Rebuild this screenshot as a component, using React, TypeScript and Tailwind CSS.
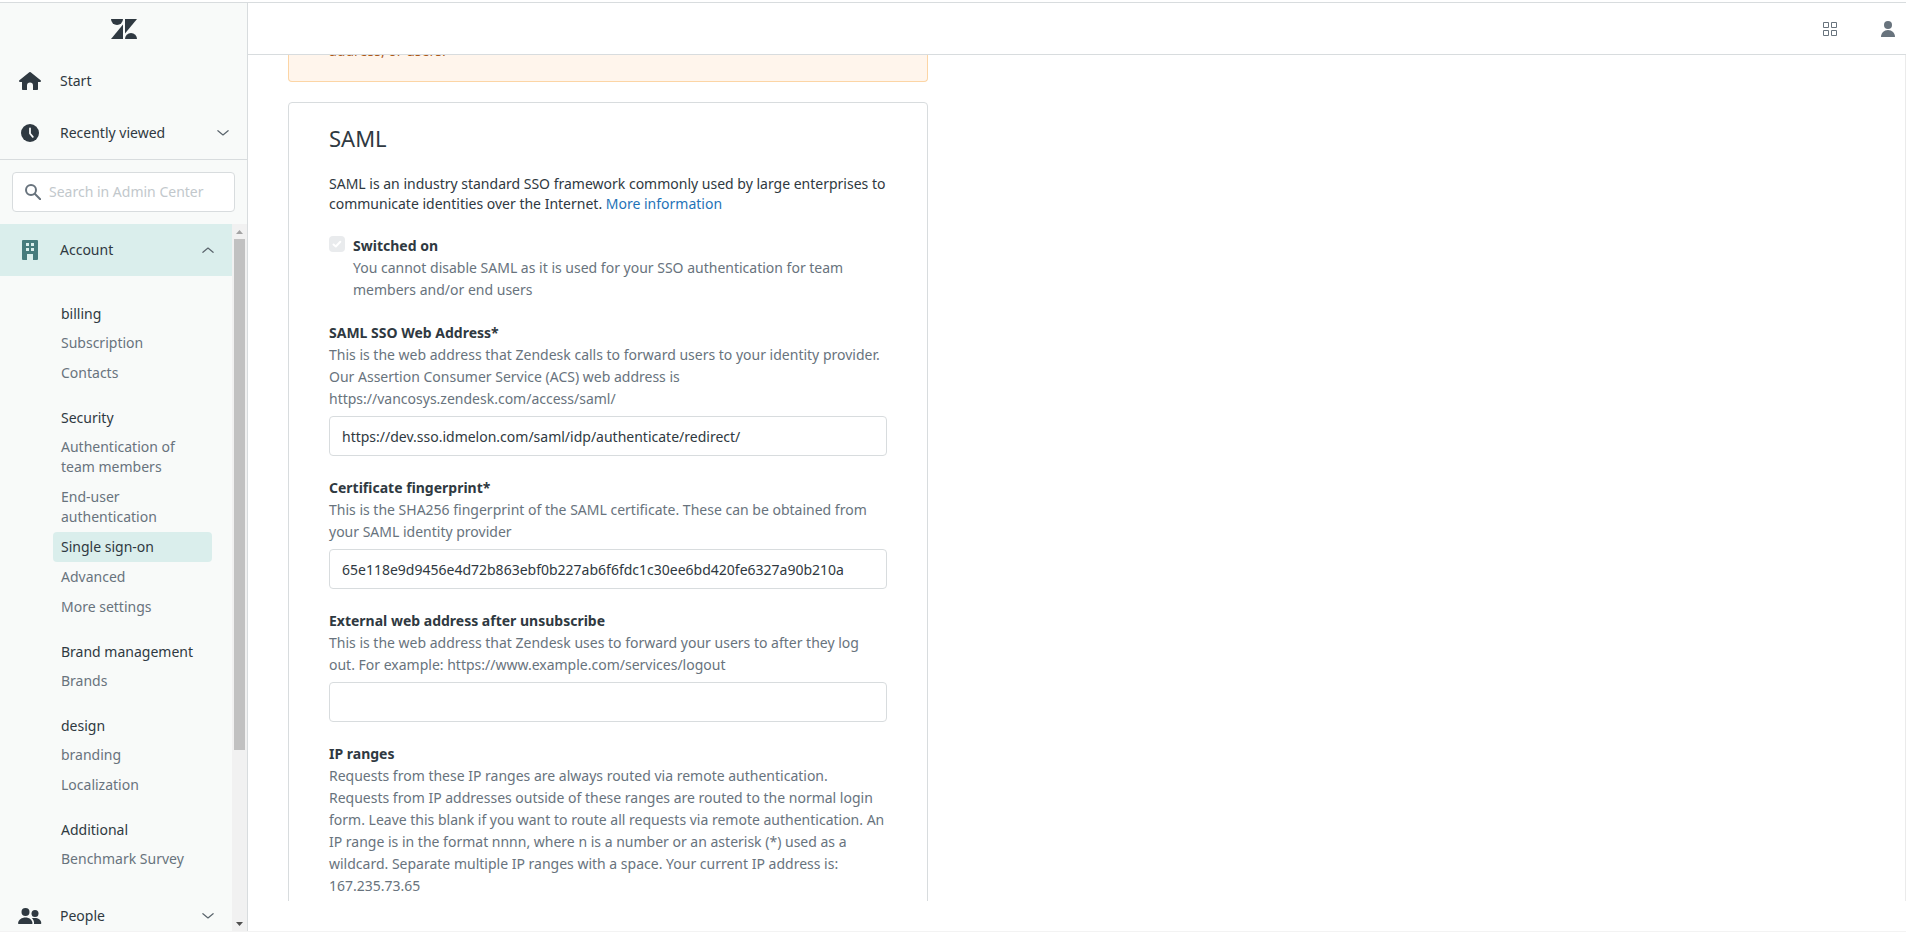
import type { ReactNode } from "react";

type NavGroup = { title: string; items: string[] };

const groups: NavGroup[] = [
  { title: "billing", items: ["Subscription", "Contacts"] },
  {
    title: "Security",
    items: [
      "Authentication of team members",
      "End-user authentication",
      "Single sign-on",
      "Advanced",
      "More settings",
    ],
  },
  { title: "Brand management", items: ["Brands"] },
  { title: "design", items: ["branding", "Localization"] },
  { title: "Additional", items: ["Benchmark Survey"] },
];

const ACTIVE_ITEM = "Single sign-on";

function Logo() {
  return (
    <svg width="26" height="20" viewBox="0 0 26 20" fill="#2f3941" aria-hidden="true">
      <path d="M12 5.6V20H0L12 5.6Z" />
      <path d="M12 0a6 6 0 0 1-12 0h12Z" />
      <path d="M14 20a6 6 0 0 1 12 0H14Z" />
      <path d="M14 14.4V0h12L14 14.4Z" />
    </svg>
  );
}

function HomeIcon() {
  return (
    <svg width="22" height="18" viewBox="0 0 22 18" fill="#2f3941" aria-hidden="true">
      <path d="M10.3.3a1.1 1.1 0 0 1 1.4 0l9.9 8c.8.7.4 1.7-.6 1.7H19v7c0 .6-.4 1-1 1h-4v-4.500a3 3 0 0 0-6 0V18H4c-.6 0-1-.4-1-1v-7H1c-1 0-1.400-1-.6-1.700l9.900-8Z" />
    </svg>
  );
}

function ClockIcon() {
  return (
    <svg width="18" height="18" viewBox="0 0 18 18" aria-hidden="true">
      <circle cx="9" cy="9" r="9" fill="#2f3941" />
      <path d="M9 4.500V9.500L11.800 12.800" fill="none" stroke="#f8f9f9" strokeWidth="1.800" strokeLinecap="round" strokeLinejoin="round" />
    </svg>
  );
}

function BuildingIcon() {
  return (
    <svg width="16" height="20" viewBox="0 0 16 20" aria-hidden="true">
      <path
        fill="#467b7c"
        fillRule="evenodd"
        d="M1 0h14a1 1 0 0 1 1 1v18a1 1 0 0 1-1 1h-4v-6H5v6H1a1 1 0 0 1-1-1V1a1 1 0 0 1 1-1Zm3 3v3h3V3H4Zm5 0v3h3V3H9ZM4 8v3h3V8H4Zm5 0v3h3V8H9Z"
      />
    </svg>
  );
}

function PeopleIcon() {
  return (
    <svg width="24" height="16" viewBox="0 0 24 16" fill="#2f3941" aria-hidden="true">
      <circle cx="7.500" cy="4" r="4" />
      <circle cx="17" cy="5.500" r="3.500" />
      <path d="M1 16c-.6 0-1-.4-.9-1C.6 11.600 3.800 9.500 7.500 9.500s6.500 2.100 7 5.500c.1.600-.3 1-.9 1H1Z" />
      <path d="M16 16c.4-2.300-.6-4.500-2.200-5.700.9-.2 2-.3 3-.3 3.400 0 6.200 1.800 6.500 5 0 .600-.4 1-1 1H16Z" />
    </svg>
  );
}

function SearchIcon() {
  return (
    <svg width="16" height="16" viewBox="0 0 16 16" fill="none" stroke="#68737d" className="shrink-0" aria-hidden="true">
      <circle cx="6" cy="6" r="5" strokeWidth="2" />
      <path d="M9.800 9.800 15.200 15.200" strokeWidth="2" strokeLinecap="round" />
    </svg>
  );
}

function Chevron({ up = false }: { up?: boolean }) {
  return (
    <svg width="12" height="6" viewBox="0 0 12 6" fill="none" stroke="#5b656d" strokeWidth="1.200" strokeLinecap="round" strokeLinejoin="round" aria-hidden="true">
      <path d={up ? "M.9 5.300 6 1l5.100 4.300" : "M.9.700 6 5 11.100.7"} />
    </svg>
  );
}

function GridIcon() {
  return (
    <svg width="14" height="14" viewBox="0 0 14 14" fill="none" stroke="#68737d" aria-hidden="true">
      <path d="M.5.500h5v5h-5zM8.500.500h5v5h-5zM.5 8.500h5v5h-5zM8.500 8.500h5v5h-5z" />
    </svg>
  );
}

function UserIcon() {
  return (
    <svg width="14" height="16" viewBox="0 0 14 16" fill="#68737d" aria-hidden="true">
      <circle cx="7" cy="4" r="4" />
      <path d="M0 16c0-4 3-7 7-7s7 3 7 7H0Z" />
    </svg>
  );
}

function NavRow({ icon, label, trailing, className = "" }: { icon: ReactNode; label: string; trailing?: ReactNode; className?: string }) {
  return (
    <button type="button" className={`flex h-13 w-full shrink-0 items-center text-left ${className}`}>
      <span className="flex w-15 shrink-0 justify-center">{icon}</span>
      <span className="grow">{label}</span>
      {trailing}
    </button>
  );
}

function Sidebar() {
  return (
    <aside className="flex w-62 shrink-0 flex-col border-r border-[#d8dcde] bg-[#f8faf9]">
      <div className="flex h-13 shrink-0 items-center justify-center">
        <Logo />
      </div>
      <NavRow icon={<HomeIcon />} label="Start" />
      <NavRow icon={<ClockIcon />} label="Recently viewed" trailing={<Chevron />} className="pr-[18px]" />
      <div className="border-t border-[#d8dcde] p-3">
        <label className="flex h-10 items-center gap-2 rounded border border-[#d8dcde] bg-white px-3">
          <SearchIcon />
          <input
            type="search"
            aria-label="Search in Admin Center"
            placeholder="Search in Admin Center"
            className="w-full min-w-0 bg-transparent outline-none placeholder:text-[#c2c8cc]"
          />
        </label>
      </div>
      <div className="flex min-h-0 grow">
        <nav className="flex min-w-0 grow flex-col overflow-hidden">
          <NavRow icon={<BuildingIcon />} label="Account" trailing={<Chevron up />} className="bg-[#daeeec] pr-[18px]" />
          <div className="flex flex-col gap-5 pt-7 pr-5 pb-4 pl-[53px]">
            {groups.map((group) => (
              <section key={group.title}>
                <h2 className="mb-1 pl-2">{group.title}</h2>
                <ul>
                  {group.items.map((item) => (
                    <li key={item}>
                      <a
                        href="#"
                        className={
                          item === ACTIVE_ITEM
                            ? "block rounded bg-[#daeeec] px-2 py-[5px] text-[#2f3941]"
                            : "block px-2 py-[5px] text-[#68737d]"
                        }
                      >
                        {item}
                      </a>
                    </li>
                  ))}
                </ul>
              </section>
            ))}
          </div>
          <NavRow icon={<PeopleIcon />} label="People" trailing={<Chevron />} className="pr-[18px]" />
        </nav>
        <div className="flex w-[15px] shrink-0 flex-col items-center bg-[#f1f1f1]" aria-hidden="true">
          <svg width="15" height="15" viewBox="0 0 15 15" fill="#a3a3a3">
            <path d="M4 10h7L7.500 6z" />
          </svg>
          <div className="w-[11px] flex-[512] bg-[#c1c1c1]" />
          <div className="flex-[166]" />
          <svg width="15" height="15" viewBox="0 0 15 15" fill="#505050">
            <path d="M4 6h7l-3.500 4z" />
          </svg>
        </div>
      </div>
    </aside>
  );
}

function Field({ id, label, hint, value }: { id: string; label: string; hint: ReactNode; value?: string }) {
  return (
    <div className="mt-[22px]">
      <label htmlFor={id} className="block font-bold">
        {label}
      </label>
      <p className="mt-px leading-[22px] text-[#68737d]">{hint}</p>
      <input
        id={id}
        type="text"
        defaultValue={value}
        className="mt-1.5 block h-10 w-full rounded border border-[#d8dcde] bg-white px-3 outline-none"
      />
    </div>
  );
}

function SamlCard() {
  return (
    <section className="mt-5 max-w-160 rounded border border-[#d8dcde] px-10 py-5">
      <h1 className="text-[22px] leading-[30px]">SAML</h1>
      <p className="mt-[21px]">
        SAML is an industry standard SSO framework commonly used by large enterprises to communicate identities over the
        Internet.{" "}
        <a href="#" className="text-[#1f73b7]">
          More information
        </a>
      </p>
      <div className="mt-[22px] flex gap-2">
        <span className="grid size-4 shrink-0">
          <input
            id="saml-on"
            type="checkbox"
            defaultChecked
            disabled
            className="col-start-1 row-start-1 size-4 appearance-none rounded bg-[#e9ebed]"
          />
          <svg
            viewBox="0 0 16 16"
            fill="none"
            stroke="#fff"
            strokeWidth="2"
            strokeLinecap="round"
            strokeLinejoin="round"
            className="pointer-events-none col-start-1 row-start-1 size-4"
            aria-hidden="true"
          >
            <path d="M4.500 8.500 6.800 10.500 11.300 5.800" />
          </svg>
        </span>
        <div>
          <label htmlFor="saml-on" className="block font-bold">
            Switched on
          </label>
          <p className="mt-px leading-[22px] text-[#68737d]">
            You cannot disable SAML as it is used for your SSO authentication for team members and/or end users
          </p>
        </div>
      </div>
      <Field
        id="sso-url"
        label="SAML SSO Web Address*"
        hint="This is the web address that Zendesk calls to forward users to your identity provider. Our Assertion Consumer Service (ACS) web address is https://vancosys.zendesk.com/access/saml/"
        value="https://dev.sso.idmelon.com/saml/idp/authenticate/redirect/"
      />
      <Field
        id="fingerprint"
        label="Certificate fingerprint*"
        hint="This is the SHA256 fingerprint of the SAML certificate. These can be obtained from your SAML identity provider"
        value="65e118e9d9456e4d72b863ebf0b227ab6f6fdc1c30ee6bd420fe6327a90b210a"
      />
      <Field
        id="logout-url"
        label="External web address after unsubscribe"
        hint="This is the web address that Zendesk uses to forward your users to after they log out. For example: https://www.example.com/services/logout"
      />
      <Field
        id="ip-ranges"
        label="IP ranges"
        hint="Requests from these IP ranges are always routed via remote authentication. Requests from IP addresses outside of these ranges are routed to the normal login form. Leave this blank if you want to route all requests via remote authentication. An IP range is in the format nnnn, where n is a number or an asterisk (*) used as a wildcard. Separate multiple IP ranges with a space. Your current IP address is: 167.235.73.65"
      />
    </section>
  );
}

export default function App() {
  return (
    <div className="flex h-screen flex-col border-b border-[#f3f3f3] bg-white pt-0.5 font-['Noto_Sans',sans-serif] text-sm leading-5 text-[#2f3941]">
      <div className="flex min-h-0 grow border-t border-[#d8dcde]">
        <Sidebar />
        <div className="flex min-w-0 grow flex-col">
          <header className="flex h-13 shrink-0 items-center justify-end gap-11 border-b border-[#d8dcde] pr-[11px]">
            <button type="button" aria-label="Products">
              <GridIcon />
            </button>
            <button type="button" aria-label="Profile">
              <UserIcon />
            </button>
          </header>
          <main className="mb-[30px] min-h-0 grow overflow-hidden border-r border-[#ebebeb] px-10">
            <div className="-mt-3.5 max-w-160 rounded-b border border-t-0 border-[#fcd5a5] bg-[#fff5ec] px-10 pb-5 text-[#ad5918]">
              address, or users.
            </div>
            <SamlCard />
          </main>
        </div>
      </div>
    </div>
  );
}
